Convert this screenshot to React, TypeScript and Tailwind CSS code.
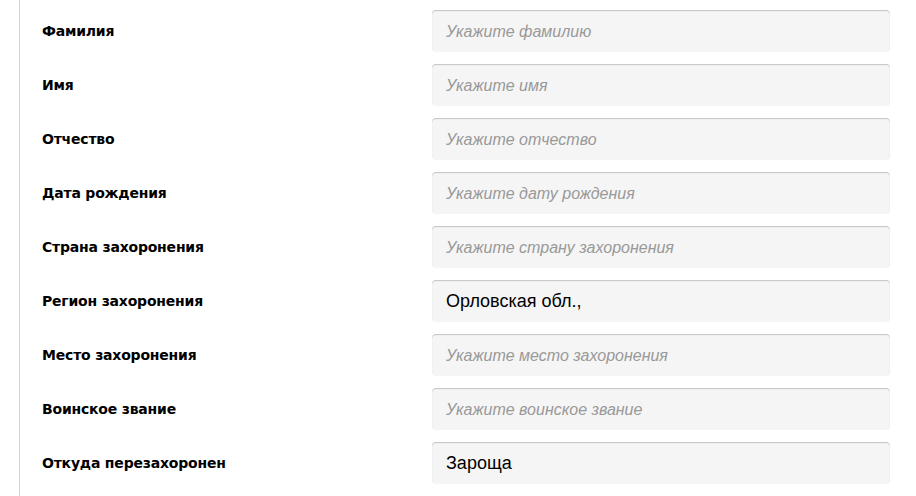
import React from 'react';

type Field = { label: string; placeholder: string; value?: string };

const fields: Field[] = [
  { label: 'Фамилия', placeholder: 'Укажите фамилию' },
  { label: 'Имя', placeholder: 'Укажите имя' },
  { label: 'Отчество', placeholder: 'Укажите отчество' },
  { label: 'Дата рождения', placeholder: 'Укажите дату рождения' },
  { label: 'Страна захоронения', placeholder: 'Укажите страну захоронения' },
  { label: 'Регион захоронения', placeholder: 'Укажите регион захоронения', value: 'Орловская обл.,' },
  { label: 'Место захоронения', placeholder: 'Укажите место захоронения' },
  { label: 'Воинское звание', placeholder: 'Укажите воинское звание' },
  { label: 'Откуда перезахоронен', placeholder: 'Укажите откуда перезахоронен', value: 'Зароща' },
  { label: '', placeholder: '' },
];

const App: React.FC = () => {
  return (
    <div className="h-[496px] overflow-hidden bg-white">
      <div className="ml-[19px] border-l border-[#d4d4d4] pt-[10px] pl-[22px] pr-[26px] min-h-[600px]">
        {fields.map((f, i) => (
          <div key={i} className="flex items-center h-[42px] mb-[12px]">
            <label className="w-[390px] shrink-0 text-[14px] font-bold text-black [font-family:'DejaVu_Sans',sans-serif] tracking-[-0.2px]">
              {f.label}
            </label>
            <input
              readOnly
              defaultValue={f.value}
              placeholder={f.placeholder}
              className="w-[458px] h-[42px] rounded-[4px] bg-[#f5f5f5] px-[14px] text-[18px] text-black outline-none shadow-[inset_0_1px_1px_rgba(0,0,0,0.2)] placeholder:italic placeholder:text-[16px] placeholder:text-[#999] [font-family:'Liberation_Sans',Arial,sans-serif]"
            />
          </div>
        ))}
      </div>
    </div>
  );
};

export default App;
